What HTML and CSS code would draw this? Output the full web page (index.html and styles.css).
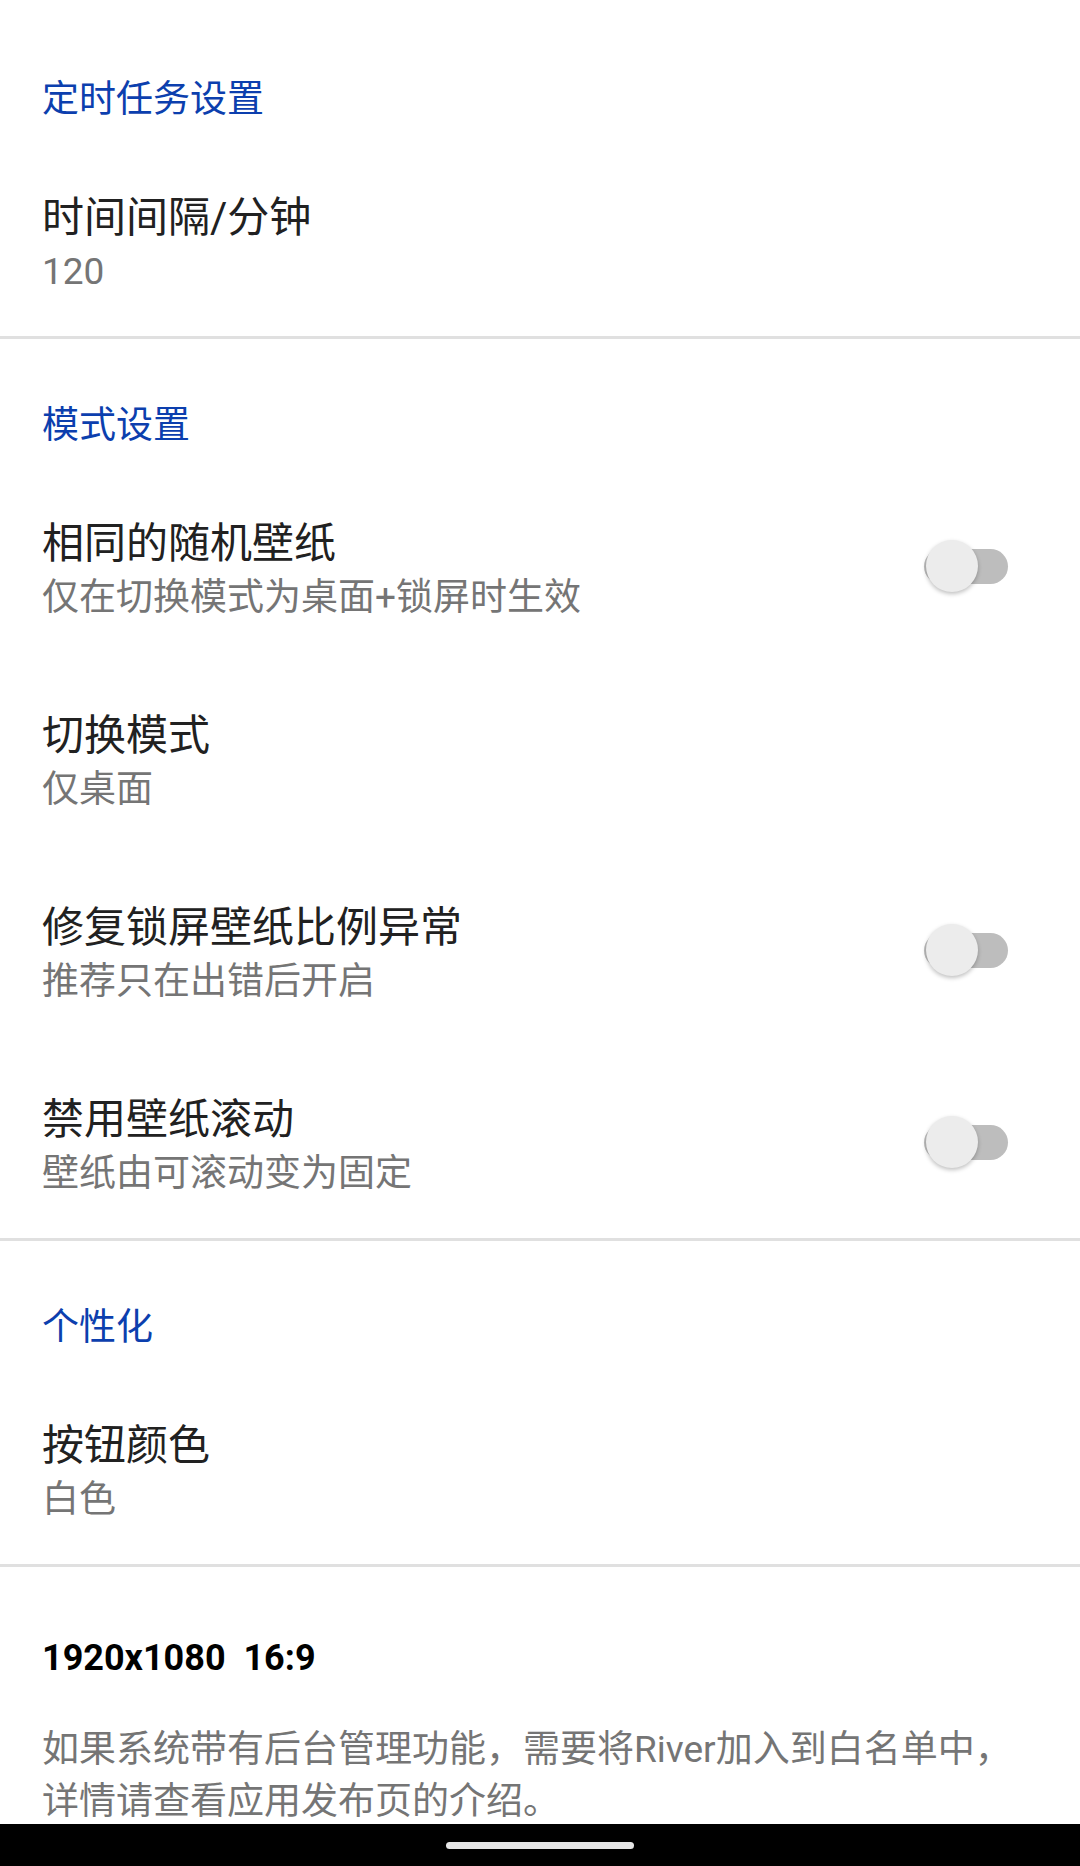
FILE: index.html
```html
<!DOCTYPE html>
<html lang="zh-CN">
<head>
  <meta charset="UTF-8">
  <title>设置</title>
  <link rel="stylesheet" href="styles.css">
</head>
<body>
  <div class="screen">
    <!-- 定时任务 -->
    <div class="category">定时任务设置</div>
    <div class="pref">
      <div class="pref-text">
        <div class="pref-title">时间间隔/分钟</div>
        <div class="pref-summary">120</div>
      </div>
    </div>
    <div class="divider"></div>

    <!-- 模式 -->
    <div class="category">模式设置</div>
    <div class="pref">
      <div class="pref-text">
        <div class="pref-title">相同的随机壁纸</div>
        <div class="pref-summary">仅在切换模式为桌面+锁屏时生效</div>
      </div>
      <div class="switch"><span class="thumb"></span></div>
    </div>
    <div class="pref">
      <div class="pref-text">
        <div class="pref-title">切换模式</div>
        <div class="pref-summary">仅桌面</div>
      </div>
    </div>
    <div class="pref">
      <div class="pref-text">
        <div class="pref-title">修复锁屏壁纸比例异常</div>
        <div class="pref-summary">推荐只在出错后开启</div>
      </div>
      <div class="switch"><span class="thumb"></span></div>
    </div>
    <div class="pref">
      <div class="pref-text">
        <div class="pref-title">禁用壁纸滚动</div>
        <div class="pref-summary">壁纸由可滚动变为固定</div>
      </div>
      <div class="switch"><span class="thumb"></span></div>
    </div>
    <div class="divider"></div>

    <!-- 个性化 -->
    <div class="category">个性化</div>
    <div class="pref">
      <div class="pref-text">
        <div class="pref-title">按钮颜色</div>
        <div class="pref-summary">白色</div>
      </div>
    </div>
    <div class="divider"></div>

    <div class="about">
      <div class="about-title">1920x1080  16:9</div>
      <div class="about-text">如果系统带有后台管理功能，需要将River加入到白名单中，详情请查看应用发布页的介绍。</div>
    </div>
  </div>

  <div class="navbar"><span class="pill"></span></div>
</body>
</html>
```

FILE: styles.css
```css
body {
  margin: 0;
  background: #fff;
  font-family: Roboto, "Noto Sans CJK SC", sans-serif;
}

.screen {
  padding-top: 13px;
}

.category {
  padding: 63px 42px 20px;
  font-size: 37px;
  line-height: 48px;
  color: #0c3fae;
}

.pref {
  display: flex;
  align-items: center;
  padding: 46px 42px 38px;
}

.pref-text {
  flex: 1;
}

.pref-title {
  font-size: 42px;
  line-height: 56px;
  color: #212121;
}

.pref-summary {
  font-size: 37px;
  line-height: 52px;
  color: #757575;
}

.switch {
  position: relative;
  width: 84px;
  height: 35px;
  margin: 0 30px 8px 0;
  border-radius: 18px;
  background: #bdbdbd;
}

.thumb {
  position: absolute;
  left: 2px;
  top: -9px;
  width: 52px;
  height: 52px;
  border-radius: 50%;
  background: #ececec;
  box-shadow: 0 2px 4px rgba(0,0,0,0.25);
}

.divider {
  height: 3px;
  background: #e0e0e0;
}

.about {
  padding: 67px 42px 0;
}

.about-title {
  font-size: 36px;
  line-height: 48px;
  font-weight: bold;
  color: #000;
  white-space: pre;
}

.about-text {
  margin-top: 42px;
  font-size: 37px;
  line-height: 52px;
  color: #757575;
}

.navbar {
  position: fixed;
  left: 0;
  right: 0;
  bottom: 0;
  height: 42px;
  background: #000;
  display: flex;
  justify-content: center;
  align-items: center;
}

.pill {
  width: 188px;
  height: 7px;
  border-radius: 4px;
  background: #e6e6e6;
}
```
